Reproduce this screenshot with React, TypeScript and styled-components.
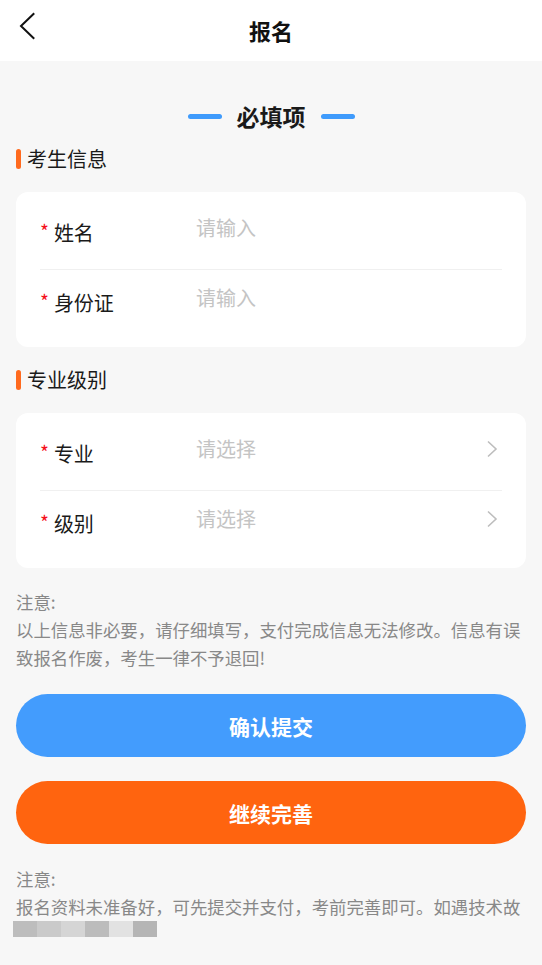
import styled, { createGlobalStyle } from 'styled-components';

const GlobalStyle = createGlobalStyle`
  html, body {
    margin: 0;
    padding: 0;
    background: #f7f7f7;
  }
  body {
    font-family: "Noto Sans CJK SC", "Noto Sans", sans-serif;
    color: #1a1a1a;
  }
  * {
    box-sizing: border-box;
  }
`;

const BackIcon = () => (
  <svg width="18" height="28" viewBox="0 0 18 28" fill="none">
    <path d="M15.5 2 L3 14 L15.5 26" stroke="#111" strokeWidth="2" strokeLinecap="square" />
  </svg>
);

const ArrowIcon = () => (
  <svg width="12" height="18" viewBox="0 0 12 18" fill="none">
    <path d="M2 1.5 L10 9 L2 16.5" stroke="#bdbdbd" strokeWidth="1.6" />
  </svg>
);

interface FieldProps {
  label: string;
  placeholder: string;
  select?: boolean;
}

function Field({ label, placeholder, select }: FieldProps) {
  return (
    <FieldRow>
      <Label>
        <Star>*</Star>
        {label}
      </Label>
      {select ? (
        <>
          <Placeholder>{placeholder}</Placeholder>
          <Arrow>
            <ArrowIcon />
          </Arrow>
        </>
      ) : (
        <Input placeholder={placeholder} />
      )}
    </FieldRow>
  );
}

const mosaic = ['#bdbdbd', '#cacaca', '#d5d5d5', '#bcbcbc', '#e2e2e2', '#b5b5b5'];

export default function App() {
  return (
    <Page>
      <GlobalStyle />
      <Header>
        <Back>
          <BackIcon />
        </Back>
        <Title>报名</Title>
      </Header>

      <Content>
        <Hero>
          <HeroLine />
          必填项
          <HeroLine />
        </Hero>

        <SectionTitle>考生信息</SectionTitle>
        <Card>
          <Field label="姓名" placeholder="请输入" />
          <Divider />
          <Field label="身份证" placeholder="请输入" />
        </Card>

        <SectionTitle>专业级别</SectionTitle>
        <Card>
          <Field label="专业" placeholder="请选择" select />
          <Divider />
          <Field label="级别" placeholder="请选择" select />
        </Card>

        <Note>
          注意:
          <br />
          以上信息非必要，请仔细填写，支付完成信息无法修改。信息有误致报名作废，考生一律不予退回!
        </Note>

        <Buttons>
          <Button $color="#439cfd">确认提交</Button>
          <Button $color="#ff640f">继续完善</Button>
        </Buttons>

        <Note $top={21}>
          注意:
          <br />
          报名资料未准备好，可先提交并支付，考前完善即可。如遇技术故
        </Note>
        <Mosaic>
          {mosaic.map((c) => (
            <MosaicCell key={c} style={{ background: c }} />
          ))}
        </Mosaic>
      </Content>
    </Page>
  );
}

const Page = styled.div`
  width: 542px;
  min-height: 965px;
  background: #f7f7f7;
`;

const Header = styled.header`
  height: 61px;
  background: #fff;
  display: flex;
  align-items: center;
  justify-content: center;
  position: relative;
`;

const Back = styled.div`
  position: absolute;
  left: 18px;
  top: 12px;
  display: flex;
`;

const Title = styled.h1`
  margin: 0;
  font-size: 22px;
  font-weight: 600;
  line-height: 30px;
  padding-bottom: 2px;
  color: #111;
`;

const Content = styled.main`
  padding: 0 16px;
  display: flex;
  flex-direction: column;
`;

const Hero = styled.div`
  padding-top: 45px;
  height: 65px;
  display: flex;
  align-items: center;
  justify-content: center;
  gap: 15px;
  font-size: 23px;
  font-weight: 600;
  line-height: 20px;
  color: #1a1a1a;
`;

const HeroLine = styled.span`
  width: 34px;
  height: 5px;
  border-radius: 3px;
  background: #3f9bfc;
`;

const SectionTitle = styled.div`
  margin: 19px 0;
  height: 28px;
  display: flex;
  align-items: center;
  gap: 6px;
  font-size: 20px;
  line-height: 28px;
  color: #1a1a1a;

  &::before {
    content: '';
    width: 5px;
    height: 20px;
    border-radius: 3px;
    background: #ff6a1e;
  }
`;

const Card = styled.section`
  background: #fff;
  border-radius: 12px;
  padding: 8px 24px;
`;

const FieldRow = styled.div`
  height: 69px;
  padding-bottom: 6px;
  display: flex;
  align-items: center;
`;

const Label = styled.div`
  width: 156px;
  flex-shrink: 0;
  font-size: 20px;
  line-height: 28px;
  color: #1a1a1a;
`;

const Star = styled.span`
  color: #f50f1a;
  font-size: 19px;
  margin-right: 5px;
  vertical-align: 2px;
`;

const Input = styled.input`
  flex: 1;
  border: none;
  outline: none;
  padding: 0;
  margin-bottom: 7px;
  background: transparent;
  font-family: inherit;
  font-size: 20px;
  line-height: 28px;
  color: #1a1a1a;

  &::placeholder {
    color: #c4c4c4;
  }
`;

const Placeholder = styled.span`
  flex: 1;
  margin-bottom: 7px;
  font-size: 20px;
  line-height: 28px;
  color: #c4c4c4;
`;

const Arrow = styled.span`
  display: flex;
  margin: 0 4px 7px 0;
`;

const Divider = styled.div`
  height: 1px;
  background: #f0f0f0;
`;

const Note = styled.p<{ $top?: number }>`
  margin: ${(p) => p.$top ?? 20}px 0 0;
  font-size: 17.4px;
  line-height: 28px;
  color: #888;
`;

const Buttons = styled.div`
  margin-top: 22px;
  display: flex;
  flex-direction: column;
  gap: 24px;
`;

const Button = styled.button<{ $color: string }>`
  height: 63px;
  border: none;
  border-radius: 32px;
  background: ${(p) => p.$color};
  color: #fff;
  font-family: inherit;
  font-size: 21px;
  font-weight: 600;
  cursor: pointer;
`;

const Mosaic = styled.div`
  display: flex;
  margin: 0 0 0 -3px;
  height: 16px;
`;

const MosaicCell = styled.span`
  width: 24px;
  height: 16px;
`;
